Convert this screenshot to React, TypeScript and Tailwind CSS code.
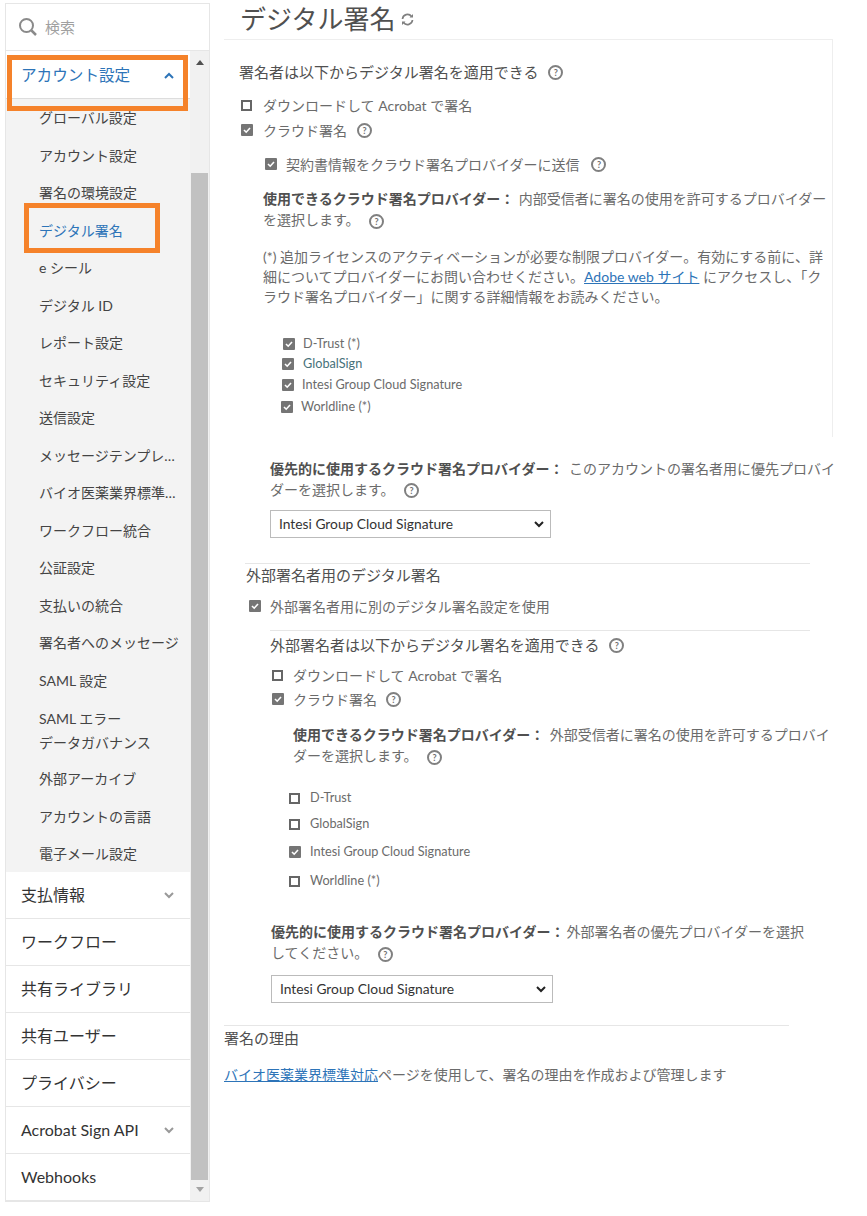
import React from 'react';

const subItems = [
  'グローバル設定',
  'アカウント設定',
  '署名の環境設定',
  'デジタル署名',
  'e シール',
  'デジタル ID',
  'レポート設定',
  'セキュリティ設定',
  '送信設定',
  'メッセージテンプレート',
  'バイオ医薬業界標準対応',
  'ワークフロー統合',
  '公証設定',
  '支払いの統合',
  '署名者へのメッセージ',
  'SAML 設定',
];

const Chevron = ({ up = false }: { up?: boolean }) => (
  <svg width="12" height="8" viewBox="0 0 12 8" fill="none" className={up ? 'text-[#2d74b8]' : 'text-[#999999]'}>
    <path d={up ? 'M2 6l4-4 4 4' : 'M2 2l4 4 4-4'} stroke="currentColor" strokeWidth="2" />
  </svg>
);

const Help = ({ className = '' }: { className?: string }) => (
  <span className={`inline-flex w-[15px] h-[15px] rounded-full border-2 border-[#808080] items-center justify-center text-[9px] leading-none font-bold text-[#707070] align-middle ${className}`}>
    ?
  </span>
);

const Check = ({ checked = true, className = '' }: { checked?: boolean; className?: string }) =>
  checked ? (
    <span className={`inline-flex shrink-0 w-[12px] h-[12px] rounded-[1px] bg-[#757575] items-center justify-center ${className}`}>
      <svg width="10" height="10" viewBox="0 0 10 10" fill="none">
        <path d="M2 5l2.2 2.2L8 3" stroke="white" strokeWidth="1.6" />
      </svg>
    </span>
  ) : (
    <span className={`inline-block shrink-0 w-[11px] h-[11px] border-2 border-[#666666] bg-white ${className}`} />
  );

const Row = ({ className = '', children }: { className?: string; children: React.ReactNode }) => (
  <div className={`flex items-center whitespace-nowrap ${className}`}>{children}</div>
);

const SideRow = ({ label, chevron = false }: { label: string; chevron?: boolean }) => (
  <div className="h-[47px] shrink-0 flex items-center justify-between pl-[15px] pr-[15px] border-b border-[#e6e6e6] text-[16px] text-[#333333]">
    <span>{label}</span>
    {chevron && <Chevron />}
  </div>
);

const ProviderSelect = ({ className = '' }: { className?: string }) => (
  <div className={`relative h-[28px] ${className}`}>
    <select defaultValue="i" className="block w-full h-full appearance-none border border-[#bbbbbb] bg-white pl-[8px] text-[13.8px] text-[#333333]">
      <option value="i">Intesi Group Cloud Signature</option>
    </select>
    <svg width="10" height="7" viewBox="0 0 10 7" fill="none" className="absolute right-[7px] top-[11px]">
      <path d="M1 1l4 4 4-4" stroke="#222222" strokeWidth="2" />
    </svg>
  </div>
);

const App = () => {
  return (
    <div className="relative w-[867px] h-[1216px] bg-white overflow-hidden flex text-[#6b6b6b] text-[14px] font-['Lato','Noto_Sans_CJK_JP',sans-serif]">
      <aside className="ml-[5px] mt-[3px] w-[205px] h-[1199px] border border-[#e6e6e6] shrink-0 flex flex-col">
        <div className="h-[47px] flex items-center pl-[12px] gap-[7px] border-b border-[#e6e6e6] text-[15px] text-[#a0a0a0] shrink-0">
          <svg width="20" height="20" viewBox="0 0 20 20" fill="none">
            <circle cx="8.5" cy="8.5" r="6.5" stroke="#8a8a8a" strokeWidth="2" />
            <path d="M13.5 13.5L18 18" stroke="#8a8a8a" strokeWidth="2.5" />
          </svg>
          検索
        </div>
        <div className="flex flex-1 min-h-0">
          <div className="w-[184px] shrink-0 flex flex-col">
            <div className="h-[48px] flex items-center justify-between pl-[15px] pr-[15px] pt-[2px] bg-white border-b border-[#dddddd] text-[15.6px] text-[#2d74b8] shrink-0">
              <span>アカウント設定</span>
              <Chevron up />
            </div>
            <div className="bg-[#f3f3f3] text-[14px] text-[#444444] pl-[33px] h-[773px] shrink-0">
              {subItems.map((item) => (
                <div key={item} className={`h-[37.5px] flex items-center pr-[6px] ${item === 'デジタル署名' ? 'text-[#2d74b8]' : ''}`}>
                  <span className="truncate">{item}</span>
                </div>
              ))}
              <div className="h-[30px] flex items-center pt-[8px]">SAML エラー</div>
              <div className="h-[26px] flex items-center">データガバナンス</div>
              <div className="h-[37.5px] flex items-center mt-[5px]">外部アーカイブ</div>
              <div className="h-[37.5px] flex items-center">アカウントの言語</div>
              <div className="h-[37.5px] flex items-center">電子メール設定</div>
            </div>
            <SideRow label="支払情報" chevron />
            <SideRow label="ワークフロー" />
            <SideRow label="共有ライブラリ" />
            <SideRow label="共有ユーザー" />
            <SideRow label="プライバシー" />
            <SideRow label="Acrobat Sign API" chevron />
            <SideRow label="Webhooks" />
          </div>
          <div className="flex-1 bg-[#f1f1f1] flex flex-col items-center">
            <div className="h-[22px] w-full flex items-center justify-center shrink-0">
              <span className="w-0 h-0 border-x-[4.5px] border-x-transparent border-b-[5px] border-b-[#505050]" />
            </div>
            <div className="w-[17px] h-[1007px] mt-[100px] bg-[#c1c1c1] shrink-0" />
            <div className="h-[19px] w-full flex items-center justify-center shrink-0">
              <span className="w-0 h-0 border-x-[4.5px] border-x-transparent border-t-[5px] border-t-[#a3a3a3]" />
            </div>
          </div>
        </div>
      </aside>

      <main className="ml-[14px] w-[610px] shrink-0">
        <div className="flex items-center h-[39px] pl-[16px] gap-[5px] text-[26px] text-[#505050]">
          デジタル署名
          <svg width="15" height="15" viewBox="0 0 15 15" fill="none">
            <path d="M2.5 7a5 5 0 0 1 9-2.5M12.5 8a5 5 0 0 1-9 2.5" stroke="#808080" strokeWidth="1.7" />
            <path d="M13 2v3.5H9.5M2 13V9.5h3.5" fill="#808080" />
          </svg>
        </div>
        <section className="border-t border-r border-[#eeeeee] h-[398px] w-[609px]">
          <Row className="h-[22px] mt-[21px] ml-[15px] text-[15px] text-[#505050] gap-[10px]">
            署名者は以下からデジタル署名を適用できる <Help />
          </Row>
          <Row className="h-[20px] mt-[12px] ml-[17px] gap-[11px]">
            <Check checked={false} /> ダウンロードして Acrobat で署名
          </Row>
          <Row className="h-[20px] mt-[5px] ml-[17px] gap-[10px]">
            <Check /> クラウド署名 <Help />
          </Row>
          <Row className="h-[20px] mt-[14px] ml-[41px] gap-[9px]">
            <Check /> 契約書情報をクラウド署名プロバイダーに送信 <Help className="ml-[3px]" />
          </Row>
          <div className="mt-[14px] ml-[39px] w-[570px] leading-[21px]">
            <b className="text-[#505050] mr-[1px]">使用できるクラウド署名プロバイダー：</b> 内部受信者に署名の使用を許可するプロバイダーを選択します。 <Help className="ml-[6px]" />
          </div>
          <div className="mt-[17px] ml-[39px] w-[570px] leading-[20px]">
            (*) 追加ライセンスのアクティベーションが必要な制限プロバイダー。有効にする前に、詳細についてプロバイダーにお問い合わせください。<a className="text-[#2d74b8] underline">Adobe web サイト</a> にアクセスし、「クラウド署名プロバイダー」に関する詳細情報をお読みください。
          </div>
          <div className="mt-[27px] ml-[59px] text-[12.7px]">
            <Row className="h-[20px] gap-[8px]"><Check /> D-Trust (*)</Row>
            <Row className="h-[20px] -ml-[1px] gap-[9px] text-[#47717a]"><Check /> GlobalSign</Row>
            <Row className="h-[21px] -ml-[1px] gap-[8px]"><Check /> Intesi Group Cloud Signature</Row>
            <Row className="h-[22px] mt-[1px] -ml-[2px] gap-[8px]"><Check /> Worldline (*)</Row>
          </div>
        </section>
        <section className="mt-[22px] ml-[46px] w-[564px]">
          <div className="leading-[20.5px] w-[568px]">
            <b className="text-[#505050] mr-[2px]">優先的に使用するクラウド署名プロバイダー：</b> このアカウントの署名者用に優先プロバイダーを選択します。 <Help className="ml-[6px]" />
          </div>
          <ProviderSelect className="mt-[10px] w-[281px]" />
        </section>
        <section className="mt-[25px] ml-[21px] w-[565px] border-t border-[#e6e6e6]">
          <div className="ml-[1px] text-[15px] text-[#505050] leading-[22px]">外部署名者用のデジタル署名</div>
          <Row className="h-[20px] mt-[10px] ml-[4px] gap-[9px]"><Check /> 外部署名者用に別のデジタル署名設定を使用</Row>
          <div className="mt-[14px] ml-[25px] border-t border-[#e6e6e6] pt-[3px]">
            <Row className="h-[22px] text-[15px] text-[#505050] gap-[10px]">
              外部署名者は以下からデジタル署名を適用できる <Help />
            </Row>
          </div>
        </section>
        <section className="ml-[48px] w-[562px]">
          <Row className="h-[20px] mt-[9px] gap-[10px]">
            <Check checked={false} /> ダウンロードして Acrobat で署名
          </Row>
          <Row className="h-[20px] mt-[4px] gap-[9px]">
            <Check /> クラウド署名 <Help />
          </Row>
          <div className="mt-[15px] ml-[21px] leading-[21px]">
            <b className="text-[#505050] mr-[2px]">使用できるクラウド署名プロバイダー：</b> 外部受信者に署名の使用を許可するプロバイダーを選択します。 <Help className="ml-[6px]" />
          </div>
          <div className="mt-[22px] ml-[17px] text-[12.7px]">
            <Row className="h-[20px] gap-[10px]"><Check checked={false} /> D-Trust</Row>
            <Row className="h-[20px] mt-[6px] gap-[10px]"><Check checked={false} /> GlobalSign</Row>
            <Row className="h-[20px] mt-[8px] gap-[9px]"><Check /> Intesi Group Cloud Signature</Row>
            <Row className="h-[20px] mt-[9px] gap-[10px]"><Check checked={false} /> Worldline (*)</Row>
          </div>
          <div className="mt-[30px] leading-[21px] -ml-[1px] w-[536px]">
            <b className="text-[#505050] mr-[2px]">優先的に使用するクラウド署名プロバイダー：</b>外部署名者の優先プロバイダーを選択してください。 <Help className="ml-[6px]" />
          </div>
          <ProviderSelect className="mt-[12px] -ml-[1px] w-[282px]" />
        </section>
        <section className="mt-[22px] w-[565px] border-t border-[#e6e6e6]">
          <div className="mt-[1px] leading-[22px] text-[15px] text-[#505050]">署名の理由</div>
          <div className="mt-[15px] leading-[22px]">
            <a className="text-[#2d74b8] underline">バイオ医薬業界標準対応</a>ページを使用して、署名の理由を作成および管理します
          </div>
        </section>
      </main>

      <div className="absolute left-[7px] top-[55px] w-[181px] h-[56px] border-[5px] border-[#f5822a]" />
      <div className="absolute left-[24px] top-[203px] w-[136px] h-[50px] border-[5px] border-[#f5822a]" />
    </div>
  );
};

export default App;
